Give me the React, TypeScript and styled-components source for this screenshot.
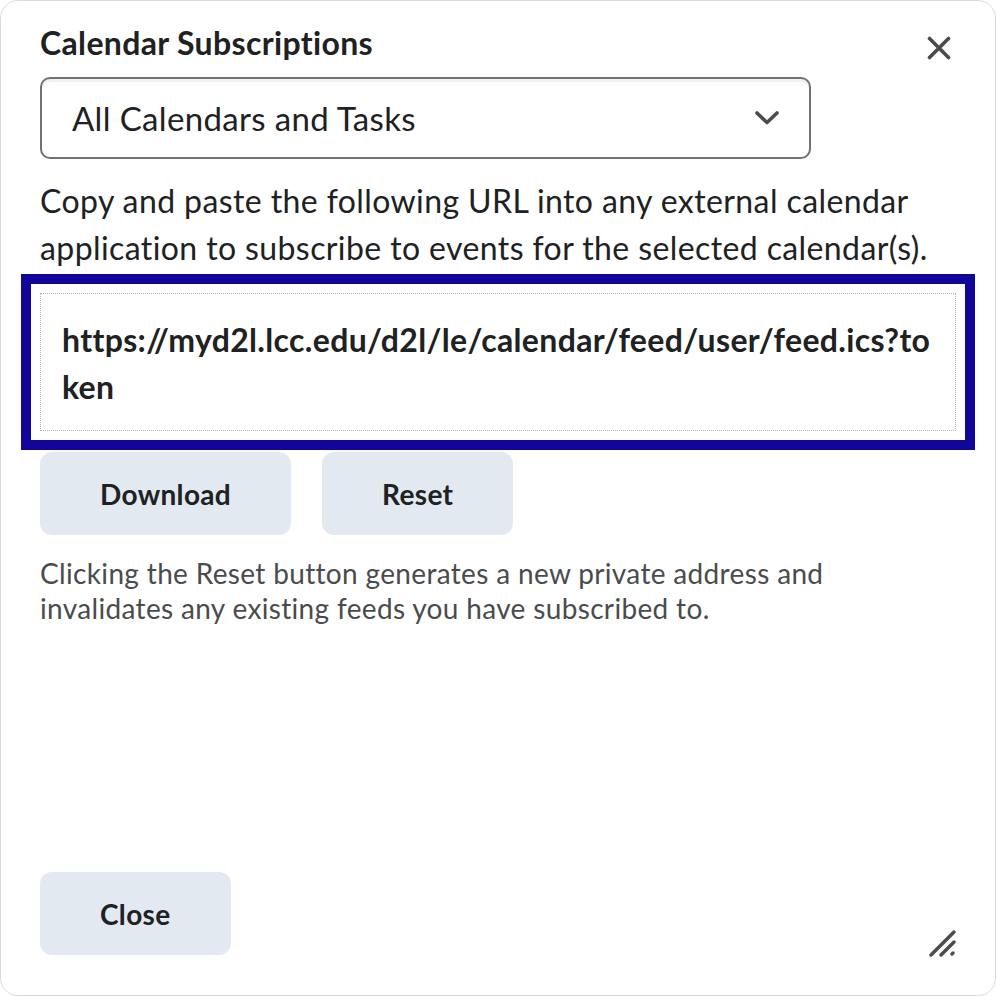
import React from "react";
import styled, { createGlobalStyle } from "styled-components";

const Global = createGlobalStyle`
  html, body { margin: 0; padding: 0; background: #ffffff; }
  body { font-family: Lato, "Noto Sans", sans-serif; color: #202122; }
  * { box-sizing: border-box; }
`;

const Dialog = styled.div`
  position: relative;
  width: 996px;
  height: 996px;
  border: 1px solid #d9dcdf;
  border-radius: 18px;
  background: #fff;
  padding: 23px 39px 40px 39px;
  display: flex;
  flex-direction: column;
`;

const Header = styled.div`
  display: flex;
  justify-content: space-between;
  align-items: flex-start;
`;

const Title = styled.h1`
  margin: 0;
  font-size: 32px;
  line-height: 38px;
  font-weight: 700;
  letter-spacing: 0.34px;
  color: #202122;
`;

const IconButton = styled.button`
  border: none;
  background: transparent;
  padding: 0;
  margin: 12px 5px 0 0;
  width: 24px;
  height: 24px;
  display: flex;
  align-items: center;
  justify-content: center;
  cursor: pointer;
`;

const Select = styled.div`
  margin-top: 15px;
  width: 771px;
  height: 82px;
  border: 2px solid #6e7376;
  border-radius: 10px;
  box-shadow: inset 0 3px 0 0 rgba(177, 185, 190, 0.2);
  display: flex;
  align-items: center;
  justify-content: space-between;
  padding: 0 30px 0 30px;
  font-size: 33px;
  letter-spacing: 0.34px;
  color: #202122;
`;

const Paragraph = styled.p`
  margin: 18px 0 0 0;
  font-size: 32px;
  line-height: 47px;
  letter-spacing: 0.4px;
  color: #202122;
`;

const UrlBox = styled.div`
  margin-top: 22px;
  border: 1px dotted #b4b4b4;
  outline: 10px solid #12069a;
  outline-offset: 9px;
  padding: 22px 21px 20px 21px;
  font-size: 32px;
  line-height: 47px;
  font-weight: 700;
  letter-spacing: 0.34px;
  color: #202122;
  word-break: break-all;
`;

const ButtonRow = styled.div`
  margin-top: 21px;
  display: flex;
  gap: 31px;
`;

const Button = styled.button`
  height: 83px;
  padding: 0 60px;
  border: none;
  border-radius: 12px;
  background: #e3e9f1;
  font-family: Lato, "Noto Sans", sans-serif;
  font-size: 28px;
  font-weight: 700;
  letter-spacing: 0.34px;
  color: #202122;
  cursor: pointer;
`;

const Note = styled.p`
  margin: 21px 0 0 0;
  font-size: 28px;
  line-height: 35px;
  letter-spacing: 0.34px;
  color: #494c4e;
`;

const Footer = styled.div`
  margin-top: auto;
  display: flex;
`;

const ResizeGrip = styled.svg`
  position: absolute;
  right: 38px;
  bottom: 38px;
`;

export default function App() {
  return (
    <>
      <Global />
      <Dialog>
        <Header>
          <Title>Calendar Subscriptions</Title>
          <IconButton aria-label="Close">
            <svg width="24" height="24" viewBox="0 0 24 24">
              <path d="M2.5 2.5 L21.5 21.5 M21.5 2.5 L2.5 21.5" stroke="#494c4e" strokeWidth="3.6" strokeLinecap="round" fill="none" />
            </svg>
          </IconButton>
        </Header>
        <Select>
          <span>All Calendars and Tasks</span>
          <svg width="24" height="14" viewBox="0 0 24 14">
            <path d="M2 2 L12 11.5 L22 2" stroke="#494c4e" strokeWidth="3.6" strokeLinecap="round" strokeLinejoin="round" fill="none" />
          </svg>
        </Select>
        <Paragraph>
          Copy and paste the following URL into any external calendar application to subscribe to events for the selected calendar(s).
        </Paragraph>
        <UrlBox>https://myd2l.lcc.edu/d2l/le/calendar/feed/user/feed.ics?token</UrlBox>
        <ButtonRow>
          <Button>Download</Button>
          <Button>Reset</Button>
        </ButtonRow>
        <Note>
          Clicking the Reset button generates a new private address and invalidates any existing feeds you have subscribed to.
        </Note>
        <Footer>
          <Button>Close</Button>
        </Footer>
        <ResizeGrip width="28" height="28" viewBox="0 0 28 28">
          <path d="M2 26 L25 3 M12 26 L25 13 M23 25 L24 24" stroke="#494c4e" strokeWidth="3.4" strokeLinecap="round" fill="none" />
        </ResizeGrip>
      </Dialog>
    </>
  );
}
